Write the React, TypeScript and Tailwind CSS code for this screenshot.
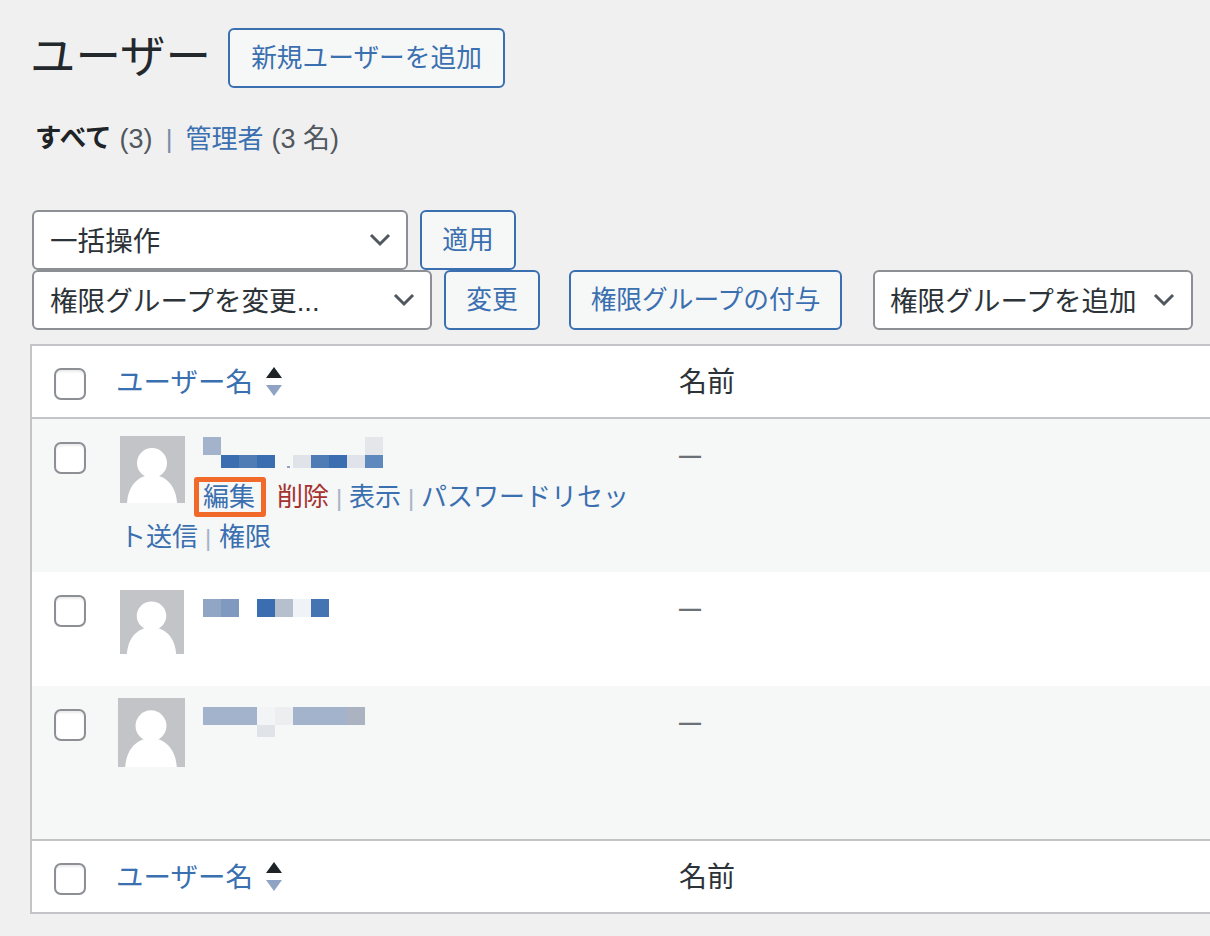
const font = '"Liberation Sans", "Noto Sans CJK JP", sans-serif';

function Chevron() {
  return (
    <svg viewBox="0 0 22 14" className="w-[22px] h-[14px] shrink-0 block">
      <path d="M2 2 L11 11 L20 2" fill="none" stroke="#50575e" strokeWidth="3" />
    </svg>
  );
}

function Select({ label, className }: { label: string; className: string }) {
  return (
    <div className={`h-[60px] flex items-center justify-between pl-[16px] pr-[15px] bg-white border-2 border-[#8c8f94] rounded-[6px] text-[27.6px] text-[#2c3338] shrink-0 ${className}`}>
      <span className="whitespace-nowrap pt-[3px]">{label}</span>
      <Chevron />
    </div>
  );
}

function Btn({ label, className }: { label: string; className: string }) {
  return (
    <div className={`h-[60px] flex items-center justify-center bg-[#f6f7f7] border-2 border-[#3a6fb0] rounded-[6px] text-[25.7px] text-[#3a6fb0] shrink-0 whitespace-nowrap ${className}`}>
      {label}
    </div>
  );
}

function Check() {
  return (
    <input
      type="checkbox"
      className="block appearance-none w-[32px] h-[32px] bg-white border-2 border-[#8c8f94] rounded-[7px] shadow-[inset_0_2px_2px_rgba(0,0,0,0.08)]"
    />
  );
}

function SortArrows() {
  return (
    <svg viewBox="0 0 16 30" className="w-[16px] h-[30px] ml-[13px] shrink-0 block">
      <path d="M8 0 L16 11 L0 11 Z" fill="#1d2327" />
      <path d="M0 18 L16 18 L8 29 Z" fill="#8fa3c4" />
    </svg>
  );
}

function Avatar({ className }: { className: string }) {
  return (
    <svg viewBox="0 0 65 67" preserveAspectRatio="none" className={`block float-left ${className}`}>
      <rect width="65" height="67" fill="#c3c4c7" />
      <circle cx="32" cy="27" r="15" fill="#fff" />
      <path d="M7 67 C8 50 18 39 32 39 C46 39 56 50 57 67 Z" fill="#fff" />
    </svg>
  );
}

type Cell = [number, number, number, number, string];

function Mosaic({ w, h, cells, className }: { w: number; h: number; cells: Cell[]; className: string }) {
  return (
    <svg width={w} height={h} viewBox={`0 0 ${w} ${h}`} className={`block ${className}`}>
      {cells.map(([x, y, cw, ch, fill], i) => (
        <rect key={i} x={x} y={y} width={cw} height={ch} fill={fill} />
      ))}
    </svg>
  );
}

function Sep() {
  return <span className="inline-block w-[20px] leading-[30px] text-center text-[#a7b4c6] text-[24px]">|</span>;
}

function HeadRow({ top }: { top: boolean }) {
  const border = top ? 'border-b-2' : 'border-t-2';
  return (
    <tr className="h-[73px] bg-white">
      <td className={`${border} border-[#c3c4c7] pl-[22px] pt-[4px]`}>
        <Check />
      </td>
      <td className={`${border} border-[#c3c4c7]`}>
        <div className="flex items-center text-[27.5px] text-[#3a6fb0]">
          <span className="pt-[3px]">ユーザー名</span>
          <SortArrows />
        </div>
      </td>
      <td className={`${border} border-[#c3c4c7] text-[28px] text-[#2c3338]`}>
        <span className="block pt-[3px]">名前</span>
      </td>
    </tr>
  );
}

function Dash({ className }: { className: string }) {
  return <td className={`align-top text-[22px] font-bold leading-[28px] text-[#6c7177] ${className}`}>—</td>;
}

export default function App() {
  return (
    <div className="w-[1210px] h-[936px] overflow-hidden bg-[#f0f0f1] pl-[32px] pt-[28px]" style={{ fontFamily: font }}>
      <div className="flex items-center h-[60px]">
        <h1 className="text-[45.5px] leading-[60px] text-[#23282d] font-normal -ml-[2px] w-[198px] whitespace-nowrap">ユーザー</h1>
        <Btn label="新規ユーザーを追加" className="w-[277px]" />
      </div>

      <div className="mt-[31px] pl-[3px] h-[40px] flex items-center text-[26px] text-[#50575e] whitespace-nowrap">
        <span className="font-bold text-[26.5px] text-[#1d2327]">すべて</span>
        <span className="ml-[8px] text-[27px]">(3)</span>
        <span className="w-[33px] text-center text-[#7b8ca6] text-[26px]">|</span>
        <span className="text-[#3a6fb0]">管理者</span>
        <span className="ml-[8px] text-[27px]">(3 名)</span>
      </div>

      <div className="mt-[51px] flex gap-[12px]">
        <Select label="一括操作" className="w-[376px]" />
        <Btn label="適用" className="w-[96px]" />
      </div>
      <div className="flex">
        <Select label="権限グループを変更..." className="w-[400px]" />
        <Btn label="変更" className="w-[96px] ml-[12px]" />
        <Btn label="権限グループの付与" className="w-[273px] ml-[29px]" />
        <Select label="権限グループを追加" className="w-[320px] ml-[31px] !pl-[15px] !pr-[16px]" />
      </div>

      <table className="mt-[14px] -ml-[2px] w-[1300px] table-fixed border-separate border-spacing-0 border-2 border-[#c3c4c7] bg-white">
        <colgroup>
          <col className="w-[84px]" />
          <col className="w-[563px]" />
          <col />
        </colgroup>
        <thead>
          <HeadRow top />
        </thead>
        <tbody>
          <tr className="h-[153px] bg-[#f6f7f7]">
            <td className="align-top pl-[22px] pt-[23px]">
              <Check />
            </td>
            <td className="align-top pl-[4px] pt-[17px] pr-[32px] text-[26px] leading-[40px] text-[#3a6fb0]">
              <Avatar className="w-[65px] h-[67px] mr-[18px]" />
              <Mosaic
                w={180}
                h={31}
                className="mt-[1px] mb-[9px]"
                cells={[
                  [0, 0, 18, 18, '#a3b3cb'],
                  [18, 18, 54, 13, '#3b6eb0'],
                  [36, 18, 18, 13, '#4f7cb5'],
                  [84, 29, 3, 2, '#8fa3c4'],
                  [90, 18, 18, 13, '#e0e3e8'],
                  [108, 18, 18, 13, '#4f7cb5'],
                  [126, 18, 18, 13, '#3b6eb0'],
                  [144, 18, 18, 13, '#e0e4ea'],
                  [162, 18, 18, 13, '#5f89bd'],
                  [162, 0, 18, 18, '#e4e6ea'],
                ]}
              />
              <span className="relative inline-block">
                <span className="absolute -left-[9px] -right-[11px] top-0 bottom-0 border-[5px] border-[#f26a2a] rounded-[3px]" />
                編集
              </span>
              <span className="inline-block w-[22px]" />
              <span className="text-[#a5322e]">削除</span>
              <Sep />
              表示
              <Sep />
              パスワードリセット送信
              <Sep />
              <span className="ml-[1px]">権限</span>
            </td>
            <Dash className="pt-[23px]" />
          </tr>
          <tr className="h-[114px] bg-white">
            <td className="align-top pl-[22px] pt-[23px]">
              <Check />
            </td>
            <td className="align-top pt-[18px]">
              <Avatar className="w-[64px] h-[64px] ml-[4px] mr-[19px]" />
              <Mosaic
                w={126}
                h={18}
                className="mt-[9px]"
                cells={[
                  [0, 0, 18, 18, '#91a6c5'],
                  [18, 0, 18, 18, '#7f99bf'],
                  [54, 0, 18, 18, '#3a6eb0'],
                  [72, 0, 18, 18, '#b5bfcd'],
                  [90, 0, 18, 18, '#f0f3f6'],
                  [108, 0, 18, 18, '#4574b2'],
                ]}
              />
            </td>
            <Dash className="pt-[23px]" />
          </tr>
          <tr className="h-[153px] bg-[#f6f7f7]">
            <td className="align-top pl-[22px] pt-[23px]">
              <Check />
            </td>
            <td className="align-top pt-[12px]">
              <Avatar className="w-[67px] h-[69px] ml-[2px] mr-[18px]" />
              <Mosaic
                w={162}
                h={30}
                className="mt-[9px]"
                cells={[
                  [0, 0, 54, 18, '#a2b3cb'],
                  [54, 0, 18, 18, '#f2f4f5'],
                  [72, 0, 18, 18, '#eceef0'],
                  [90, 0, 54, 18, '#a2b3cb'],
                  [144, 0, 18, 18, '#abb3c1'],
                  [54, 18, 18, 12, '#e0e3e8'],
                ]}
              />
            </td>
            <Dash className="pt-[23px]" />
          </tr>
        </tbody>
        <tfoot>
          <HeadRow top={false} />
        </tfoot>
      </table>
    </div>
  );
}
